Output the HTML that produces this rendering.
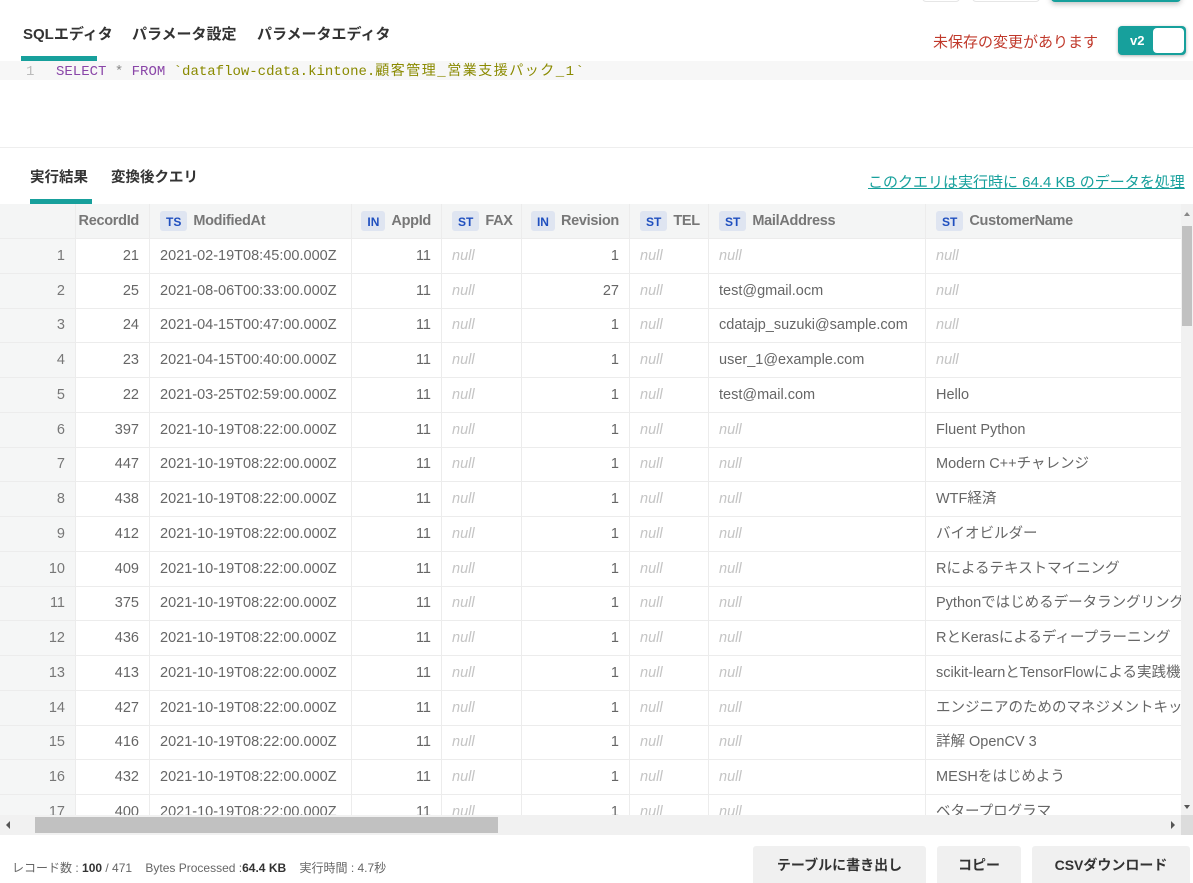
<!DOCTYPE html>
<html><head><meta charset="utf-8"><style>
*{box-sizing:border-box;margin:0;padding:0}
body{width:1193px;height:883px;overflow:hidden;background:#fff;font-family:"Liberation Sans","Noto Sans CJK JP",sans-serif;color:#666;position:relative}
.abs{position:absolute}
.tab{position:absolute;font-size:15px;font-weight:bold;color:#333;top:23px}
.code{position:absolute;left:0;top:61px;width:1193px;height:19px;background:#f7f7f7;font-family:"Liberation Mono","Noto Sans CJK JP",monospace;font-size:14px;line-height:19px}
.tbl{position:absolute;left:0;top:204px;width:1181px;height:611px;overflow:hidden;font-size:14.5px}
.row{display:flex;height:34.75px;border-bottom:1px solid #ececec;align-items:center}
.row>div{height:100%;border-right:1px solid #ececec;padding:0 10px;display:flex;align-items:center;white-space:nowrap;overflow:hidden;flex:none;line-height:16px}
.hd{background:#f4f5f5;font-weight:bold;color:#777;height:35px!important;letter-spacing:-0.3px}
.c0{width:76px;justify-content:flex-end;background:#f5f6f6;color:#777}
.c1{width:74px;justify-content:flex-end;padding:0 10px 0 2px!important}
.c2{width:202px}
.c3{width:90px;justify-content:flex-end}
.c4{width:80px}
.c5{width:108px;justify-content:flex-end}
.c6{width:79px}
.c7{width:217px}
.c8{width:255px;border-right:none!important}
.n{font-style:italic;color:#c4c4c4}
.b{display:inline-block;background:#dfe5f1;color:#1f4fbf;font-size:12px;font-weight:bold;padding:3px 6px 1px;border-radius:3px;margin-right:6px;letter-spacing:0}
.hd .c0{background:#f4f5f5}
.btn{position:absolute;top:846px;height:37px;background:#f0f0f0;border-radius:3px 3px 0 0;font-size:14px;font-weight:bold;color:#333;display:flex;align-items:center;justify-content:center}
</style></head><body>
<div class="abs" style="left:922px;top:-6px;width:38px;height:8px;border:1px solid #e6e6e6;border-radius:4px"></div>
<div class="abs" style="left:972px;top:-6px;width:68px;height:8px;border:1px solid #e6e6e6;border-radius:4px"></div>
<div class="abs" style="left:1051px;top:-10px;width:130px;height:12px;background:#17a09c;border-radius:4px;box-shadow:0 2px 6px rgba(0,0,0,.25)"></div>
<div class="tab" style="left:23px">SQLエディタ</div>
<div class="tab" style="left:132px">パラメータ設定</div>
<div class="tab" style="left:257px">パラメータエディタ</div>
<div class="abs" style="left:21px;top:56px;width:76px;height:5px;background:#17a09c"></div>
<div class="abs" style="left:933px;top:31px;font-size:15px;color:#c0392b">未保存の変更があります</div>
<div class="abs" style="left:1118px;top:26px;width:68px;height:29px;background:#17a09c;border-radius:4px;box-shadow:0 1px 3px rgba(0,0,0,.3)"><span style="position:absolute;left:12px;top:7px;color:#fff;font-size:13px;font-weight:bold">v2</span><div style="position:absolute;left:35px;top:2px;width:31px;height:25px;background:#fff;border-radius:4px"></div></div>
<div class="code"><span style="position:absolute;left:26px;top:2px;color:#bbb">1</span><span style="position:absolute;left:56px;top:2px"><span style="color:#8a46a8">SELECT</span> <span style="color:#888">*</span> <span style="color:#8a46a8">FROM</span> <span style="color:#8a8a00">`dataflow-cdata.kintone.<span style="letter-spacing:1.5px">顧客管理_営業支援パック_1</span>`</span></span></div>
<div class="abs" style="left:0;top:147px;width:1193px;height:1px;background:#eee"></div>
<div class="tab" style="left:30px;top:166px;font-size:14.5px">実行結果</div>
<div class="tab" style="left:111px;top:166px;font-size:14.5px">変換後クエリ</div>
<div class="abs" style="left:30px;top:199px;width:62px;height:5px;background:#17a09c"></div>
<div class="abs" style="left:868px;top:171px;font-size:15px;color:#17a09c;text-decoration:underline">このクエリは実行時に 64.4 KB のデータを処理</div>
<div class="tbl">
<div class="row hd"><div class="c0"></div><div class="c1">RecordId</div><div class="c2"><span class="b">TS</span>ModifiedAt</div><div class="c3"><span class="b">IN</span>AppId</div><div class="c4"><span class="b">ST</span>FAX</div><div class="c5"><span class="b">IN</span>Revision</div><div class="c6"><span class="b">ST</span>TEL</div><div class="c7"><span class="b">ST</span>MailAddress</div><div class="c8"><span class="b">ST</span>CustomerName</div></div>
<div class="row"><div class="c0">1</div><div class="c1">21</div><div class="c2">2021-02-19T08:45:00.000Z</div><div class="c3">11</div><div class="c4 n">null</div><div class="c5">1</div><div class="c6 n">null</div><div class="c7 n">null</div><div class="c8 n">null</div></div>
<div class="row"><div class="c0">2</div><div class="c1">25</div><div class="c2">2021-08-06T00:33:00.000Z</div><div class="c3">11</div><div class="c4 n">null</div><div class="c5">27</div><div class="c6 n">null</div><div class="c7">test@gmail.ocm</div><div class="c8 n">null</div></div>
<div class="row"><div class="c0">3</div><div class="c1">24</div><div class="c2">2021-04-15T00:47:00.000Z</div><div class="c3">11</div><div class="c4 n">null</div><div class="c5">1</div><div class="c6 n">null</div><div class="c7">cdatajp_suzuki@sample.com</div><div class="c8 n">null</div></div>
<div class="row"><div class="c0">4</div><div class="c1">23</div><div class="c2">2021-04-15T00:40:00.000Z</div><div class="c3">11</div><div class="c4 n">null</div><div class="c5">1</div><div class="c6 n">null</div><div class="c7">user_1@example.com</div><div class="c8 n">null</div></div>
<div class="row"><div class="c0">5</div><div class="c1">22</div><div class="c2">2021-03-25T02:59:00.000Z</div><div class="c3">11</div><div class="c4 n">null</div><div class="c5">1</div><div class="c6 n">null</div><div class="c7">test@mail.com</div><div class="c8">Hello</div></div>
<div class="row"><div class="c0">6</div><div class="c1">397</div><div class="c2">2021-10-19T08:22:00.000Z</div><div class="c3">11</div><div class="c4 n">null</div><div class="c5">1</div><div class="c6 n">null</div><div class="c7 n">null</div><div class="c8">Fluent Python</div></div>
<div class="row"><div class="c0">7</div><div class="c1">447</div><div class="c2">2021-10-19T08:22:00.000Z</div><div class="c3">11</div><div class="c4 n">null</div><div class="c5">1</div><div class="c6 n">null</div><div class="c7 n">null</div><div class="c8">Modern C++チャレンジ</div></div>
<div class="row"><div class="c0">8</div><div class="c1">438</div><div class="c2">2021-10-19T08:22:00.000Z</div><div class="c3">11</div><div class="c4 n">null</div><div class="c5">1</div><div class="c6 n">null</div><div class="c7 n">null</div><div class="c8">WTF経済</div></div>
<div class="row"><div class="c0">9</div><div class="c1">412</div><div class="c2">2021-10-19T08:22:00.000Z</div><div class="c3">11</div><div class="c4 n">null</div><div class="c5">1</div><div class="c6 n">null</div><div class="c7 n">null</div><div class="c8">バイオビルダー</div></div>
<div class="row"><div class="c0">10</div><div class="c1">409</div><div class="c2">2021-10-19T08:22:00.000Z</div><div class="c3">11</div><div class="c4 n">null</div><div class="c5">1</div><div class="c6 n">null</div><div class="c7 n">null</div><div class="c8">Rによるテキストマイニング</div></div>
<div class="row"><div class="c0">11</div><div class="c1">375</div><div class="c2">2021-10-19T08:22:00.000Z</div><div class="c3">11</div><div class="c4 n">null</div><div class="c5">1</div><div class="c6 n">null</div><div class="c7 n">null</div><div class="c8">Pythonではじめるデータラングリング</div></div>
<div class="row"><div class="c0">12</div><div class="c1">436</div><div class="c2">2021-10-19T08:22:00.000Z</div><div class="c3">11</div><div class="c4 n">null</div><div class="c5">1</div><div class="c6 n">null</div><div class="c7 n">null</div><div class="c8">RとKerasによるディープラーニング</div></div>
<div class="row"><div class="c0">13</div><div class="c1">413</div><div class="c2">2021-10-19T08:22:00.000Z</div><div class="c3">11</div><div class="c4 n">null</div><div class="c5">1</div><div class="c6 n">null</div><div class="c7 n">null</div><div class="c8">scikit-learnとTensorFlowによる実践機械学習</div></div>
<div class="row"><div class="c0">14</div><div class="c1">427</div><div class="c2">2021-10-19T08:22:00.000Z</div><div class="c3">11</div><div class="c4 n">null</div><div class="c5">1</div><div class="c6 n">null</div><div class="c7 n">null</div><div class="c8">エンジニアのためのマネジメントキット</div></div>
<div class="row"><div class="c0">15</div><div class="c1">416</div><div class="c2">2021-10-19T08:22:00.000Z</div><div class="c3">11</div><div class="c4 n">null</div><div class="c5">1</div><div class="c6 n">null</div><div class="c7 n">null</div><div class="c8">詳解 OpenCV 3</div></div>
<div class="row"><div class="c0">16</div><div class="c1">432</div><div class="c2">2021-10-19T08:22:00.000Z</div><div class="c3">11</div><div class="c4 n">null</div><div class="c5">1</div><div class="c6 n">null</div><div class="c7 n">null</div><div class="c8">MESHをはじめよう</div></div>
<div class="row"><div class="c0">17</div><div class="c1">400</div><div class="c2">2021-10-19T08:22:00.000Z</div><div class="c3">11</div><div class="c4 n">null</div><div class="c5">1</div><div class="c6 n">null</div><div class="c7 n">null</div><div class="c8">ベタープログラマ</div></div>
</div>
<div class="abs" style="left:1181px;top:204px;width:12px;height:611px;background:#f1f1f1"><div style="position:absolute;left:1px;top:22px;width:10px;height:100px;background:#c1c1c1"></div><div style="position:absolute;left:3px;top:8px;border:3px solid transparent;border-bottom:4px solid #888;border-top:none"></div><div style="position:absolute;left:3px;bottom:6px;border:3px solid transparent;border-top:4px solid #555;border-bottom:none"></div></div>
<div class="abs" style="left:0;top:815px;width:1181px;height:20px;background:#f1f1f1"><div style="position:absolute;left:35px;top:2px;width:463px;height:16px;background:#c1c1c1"></div><div style="position:absolute;left:6px;top:6px;border:4px solid transparent;border-right:4px solid #555;border-left:none"></div><div style="position:absolute;right:6px;top:6px;border:4px solid transparent;border-left:4px solid #555;border-right:none"></div></div>
<div class="abs" style="left:1181px;top:815px;width:12px;height:20px;background:#dcdcdc"></div>
<div class="abs" style="left:12px;top:859px;font-size:12px;color:#666">レコード数 : <b style="color:#333">100</b> / 471 &nbsp;&nbsp;&nbsp;Bytes Processed :<b style="color:#333">64.4 KB</b> &nbsp;&nbsp;&nbsp;実行時間 : 4.7秒</div>
<div class="btn" style="left:753px;width:173px">テーブルに書き出し</div>
<div class="btn" style="left:937px;width:84px">コピー</div>
<div class="btn" style="left:1032px;width:158px">CSVダウンロード</div>
</body></html>
